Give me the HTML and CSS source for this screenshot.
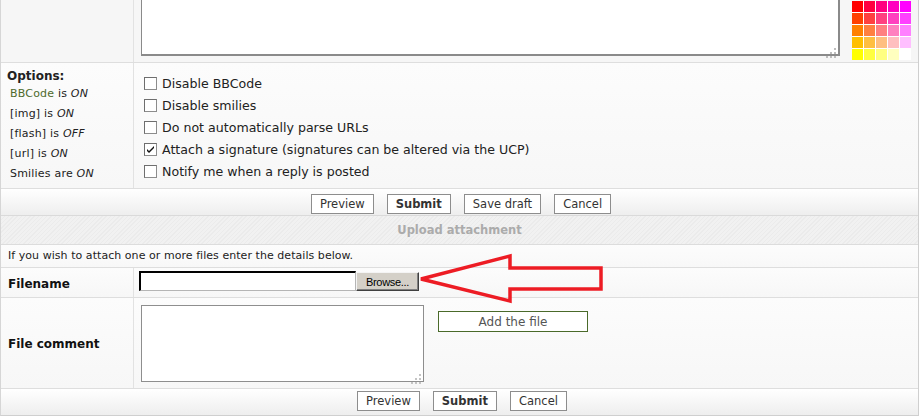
FILE: index.html
```html
<!DOCTYPE html>
<html lang="en">
<head>
    <meta charset="UTF-8">
    <title>Post a reply - attachments</title>
    <link rel="stylesheet" href="styles.css">
</head>
<body>
    <!-- Posting form panel -->
    <div class="panel">

        <!-- Message body (scrolled, only the bottom is visible) -->
        <div class="row row-message">
            <div class="label-col"></div>
            <div class="field-col">
                <span class="textarea-wrap">
                    <textarea class="message-box"></textarea>
                    <svg class="grip" width="10" height="10" viewBox="0 0 10 10">
                        <rect x="8" y="0" width="2" height="2"/>
                        <rect x="4" y="4" width="2" height="2"/><rect x="8" y="4" width="2" height="2"/>
                        <rect x="0" y="8" width="2" height="2"/><rect x="4" y="8" width="2" height="2"/><rect x="8" y="8" width="2" height="2"/>
                    </svg>
                </span>
                <div class="palette" id="palette"></div>
            </div>
        </div>

        <!-- Posting options -->
        <div class="row row-options">
            <div class="label-col">
                <div class="options-title">Options:</div>
                <div class="option-status"><a href="#" class="link">BBCode</a> is <em>ON</em></div>
                <div class="option-status">[img] is <em>ON</em></div>
                <div class="option-status">[flash] is <em>OFF</em></div>
                <div class="option-status">[url] is <em>ON</em></div>
                <div class="option-status">Smilies are <em>ON</em></div>
            </div>
            <div class="field-col checks">
                <label class="check"><span class="box"></span>Disable BBCode</label>
                <label class="check"><span class="box"></span>Disable smilies</label>
                <label class="check"><span class="box"></span>Do not automatically parse URLs</label>
                <label class="check"><span class="box">
                    <svg width="11" height="11" viewBox="0 0 11 11"><path d="M2 5 L4 7 L9 2 L9 4 L4 9 L2 7 Z"/></svg>
                </span>Attach a signature (signatures can be altered via the UCP)</label>
                <label class="check"><span class="box"></span>Notify me when a reply is posted</label>
            </div>
        </div>

        <!-- Submit buttons -->
        <div class="buttons">
            <button class="btn btn-wide">Preview</button>
            <button class="btn btn-wide btn-main">Submit</button>
            <button class="btn">Save draft</button>
            <button class="btn">Cancel</button>
        </div>

        <!-- Attachment section -->
        <div class="section-head">Upload attachment</div>
        <div class="info">If you wish to attach one or more files enter the details below.</div>

        <div class="row row-file">
            <div class="label-col"><strong>Filename</strong></div>
            <div class="field-col">
                <span class="file-text"></span><button class="browse">Browse...</button>
            </div>
        </div>

        <div class="row row-comment">
            <div class="label-col"><strong>File comment</strong></div>
            <div class="field-col">
                <span class="textarea-wrap">
                    <textarea class="comment-box"></textarea>
                    <svg class="grip grip-small" width="10" height="10" viewBox="0 0 10 10">
                        <rect x="8" y="0" width="2" height="2"/>
                        <rect x="4" y="4" width="2" height="2"/><rect x="8" y="4" width="2" height="2"/>
                        <rect x="0" y="8" width="2" height="2"/><rect x="4" y="8" width="2" height="2"/><rect x="8" y="8" width="2" height="2"/>
                    </svg>
                </span>
                <button class="btn btn-add">Add the file</button>
            </div>
        </div>

        <div class="buttons buttons-bottom">
            <button class="btn btn-wide">Preview</button>
            <button class="btn btn-wide btn-main">Submit</button>
            <button class="btn">Cancel</button>
        </div>

        <!-- Red annotation arrow pointing at the Browse button -->
        <svg class="arrow" width="920" height="416" viewBox="0 0 920 416">
            <polygon points="421,279 510,256 510,268 601,268 601,289 510,289 510,301"/>
        </svg>
    </div>

    <script>
        // Build the colour palette (5 x 5 phpBB swatches)
        var greens = ['00', '40', '80', 'BF', 'FF'];
        var blues = ['00', '40', '80', 'BF', 'FF'];
        var palette = document.getElementById('palette');
        for (var r = 0; r < 5; r++) {
            for (var c = 0; c < 5; c++) {
                var cell = document.createElement('span');
                cell.className = 'swatch';
                cell.style.background = '#FF' + greens[r] + blues[c];
                palette.appendChild(cell);
            }
        }
    </script>
</body>
</html>
```

FILE: styles.css
```css
* {
    margin: 0;
    padding: 0;
    box-sizing: border-box;
}

body {
    font-family: "DejaVu Sans", Verdana, sans-serif;
    font-size: 12px;
    color: #222;
    background: #fff;
    width: 920px;
    height: 416px;
    overflow: hidden;
}

/* Outer panel */
.panel {
    position: relative;
    width: 919px;
    height: 416px;
    border-left: 1px solid #d6d6d6;
    border-right: 1px solid #cfcfcf;
    border-bottom: 1px solid #cfcfcf;
    background: #f7f7f7;
}

/* Two column rows */
.row {
    display: flex;
    border-bottom: 1px solid #dedede;
    background: linear-gradient(#fcfcfc, #f7f7f7);
}

.label-col {
    width: 133px;
    flex-shrink: 0;
    border-right: 1px solid #e2e2e2;
    padding-left: 6px;
}

.field-col {
    flex: 1;
    display: flex;
}

/* Message area */
.row-message {
    height: 63px;
    background: #f6f6f6;
}

.row-message .field-col {
    padding-left: 7px;
}

.textarea-wrap {
    position: relative;
    display: block;
}

textarea {
    display: block;
    resize: none;
    background: #fff;
    font-family: inherit;
    outline: none;
}

.message-box {
    width: 699px;
    height: 56px;
    border: 1px solid #8a8a8a;
    border-top: none;
    border-right-width: 2px;
    border-bottom-width: 2px;
}

.grip {
    position: absolute;
    right: 4px;
    bottom: 4px;
    fill: #bdbdbd;
}

.grip-small {
    right: 3px;
    bottom: 4px;
    fill: #c4c4c4;
}

.palette {
    display: grid;
    grid-template-columns: repeat(5, 11px);
    grid-auto-rows: 11px;
    gap: 1px;
    background: #fff;
    margin-left: 12px;
    margin-top: 1px;
    height: 59px;
    width: 59px;
}

/* Options */
.row-options {
    height: 126px;
}

.row-options .label-col {
    padding-top: 5px;
}

.options-title {
    font-weight: bold;
    line-height: 16px;
}

.option-status {
    font-size: 11px;
    line-height: 20px;
    padding-left: 3px;
    color: #222;
    letter-spacing: 0.2px;
}

.link {
    color: #4f6a2c;
    text-decoration: none;
}

.checks {
    flex-direction: column;
    padding: 9px 0 0 10px;
}

.check {
    display: flex;
    align-items: center;
    height: 22px;
    font-size: 12.6px;
    color: #222;
}

.box {
    width: 13px;
    height: 13px;
    border: 1px solid #8c8c8c;
    border-top-color: #6e6e6e;
    border-left-color: #6e6e6e;
    background: #fff;
    margin-right: 5px;
    display: flex;
    align-items: center;
    justify-content: center;
}

.box svg {
    fill: #111;
}

/* Buttons */
.buttons {
    height: 27px;
    display: flex;
    justify-content: center;
    gap: 13px;
    padding-top: 5px;
    padding-left: 3px;
    background: linear-gradient(#ffffff, #eeeeee);
    border-bottom: 1px solid #dadada;
}

.buttons-bottom {
    height: 26px;
    padding-top: 2px;
    padding-left: 5px;
    border-bottom: none;
}

.btn {
    height: 20px;
    padding: 0 8px;
    font-family: inherit;
    font-size: 11.5px;
    color: #333;
    background: #fff;
    border: 1px solid #8d8d8d;
    cursor: pointer;
}

.btn-wide {
    min-width: 62px;
}

.btn-main {
    font-weight: bold;
}

/* Attachment section */
.section-head {
    height: 29px;
    display: flex;
    align-items: center;
    justify-content: center;
    font-size: 11.5px;
    font-weight: bold;
    color: #ababab;
    background: repeating-linear-gradient(-45deg, #f1f1f1 0 2px, #ebebeb 2px 3px);
    border-bottom: 1px solid #dcdcdc;
}

.info {
    height: 23px;
    line-height: 22px;
    padding-left: 7px;
    font-size: 11px;
    letter-spacing: 0.05px;
    color: #222;
    border-bottom: 1px solid #dedede;
    background: linear-gradient(#fcfcfc, #f8f8f8);
}

.row-file {
    height: 30px;
}

.row-file .label-col,
.row-comment .label-col {
    display: flex;
    align-items: center;
    padding-left: 7px;
    padding-top: 2px;
    color: #111;
}

.row-file .field-col {
    align-items: center;
    padding-left: 5px;
    padding-bottom: 3px;
}

.file-text {
    width: 217px;
    height: 20px;
    background: #fff;
    border-style: solid;
    border-width: 2px 1px 1px 2px;
    border-color: #000 #b5b5b5 #b5b5b5 #000;
}

.browse {
    width: 63px;
    height: 19px;
    margin-top: 1px;
    font-family: "Liberation Sans", Arial, sans-serif;
    font-size: 11px;
    letter-spacing: -0.3px;
    color: #000;
    background: #d4d0c8;
    border: 1px solid;
    border-color: #f4f4f4 #404040 #404040 #f4f4f4;
    box-shadow: inset -1px -1px #808080;
}

.row-comment {
    height: 91px;
}

.row-comment .field-col {
    padding: 7px 0 0 7px;
}

.comment-box {
    width: 283px;
    height: 77px;
    border: 1px solid #8e8e8e;
}

.btn-add {
    width: 150px;
    height: 21px;
    margin: 6px 0 0 14px;
    border-color: #4a6a2a;
    color: #555;
    font-size: 12px;
}

/* Annotation overlay */
.arrow {
    position: absolute;
    left: -1px;
    top: 0;
    pointer-events: none;
}

.arrow polygon {
    fill: none;
    stroke: #ed1c24;
    stroke-width: 3.5;
    stroke-linejoin: miter;
}
```
